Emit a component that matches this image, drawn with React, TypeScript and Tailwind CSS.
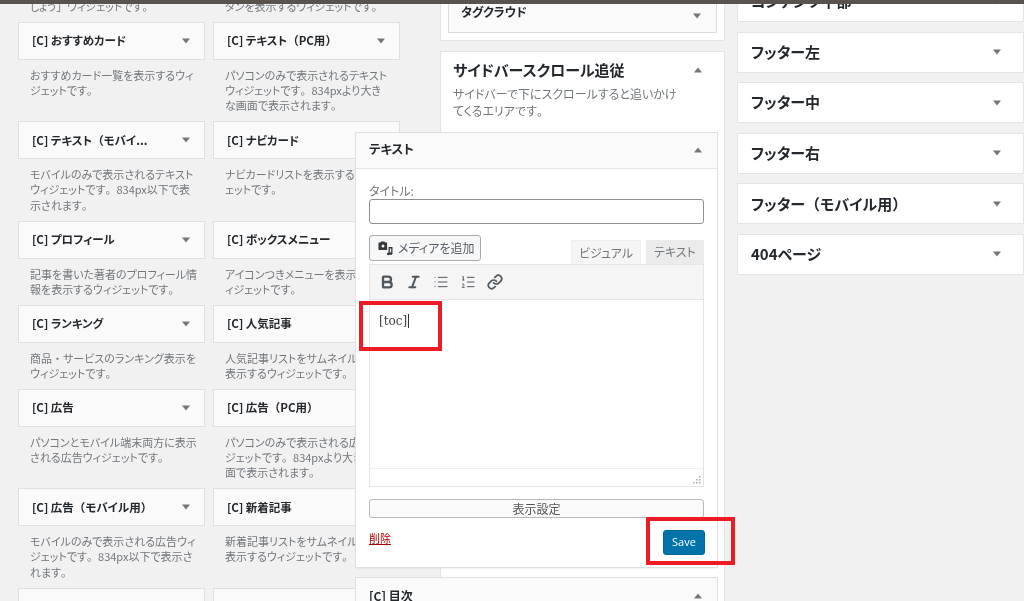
import { Bold, Italic, List, ListOrdered, Link } from "lucide-react";
import type { ReactNode } from "react";

const font = "[font-family:'Noto_Sans_CJK_JP','Liberation_Sans',sans-serif] [font-feature-settings:'palt']";

// Kana stay proportional; brackets and full stops keep their full width, as in the reference.
function J({ children }: { children: string }): ReactNode {
  return children.split(/([（）。・」])/).map((p, i) =>
    /^[（）。・」]$/.test(p) ? (
      <span key={i} className="[font-feature-settings:normal]">{p}</span>
    ) : (
      p
    )
  );
}

function Arrow({ up = false }: { up?: boolean }) {
  return (
    <svg width="10" height="6" viewBox="0 0 10 6" className="shrink-0 text-[#72777c]">
      <path d={up ? "M5 0.5 9 5.5H1Z" : "M1 0.5H9L5 5.5Z"} fill="currentColor" />
    </svg>
  );
}

type W = { t?: string; d: string[] };
const rows: W[][] = [
  [{ d: ["しょう」ウィジェットです。"] }, { d: ["タンを表示するウィジェットです。"] }],
  [
    { t: "[C] おすすめカード", d: ["おすすめカード一覧を表示するウィ", "ジェットです。"] },
    { t: "[C] テキスト（PC用）", d: ["パソコンのみで表示されるテキスト", "ウィジェットです。834pxより大き", "な画面で表示されます。"] },
  ],
  [
    { t: "[C] テキスト（モバイ...", d: ["モバイルのみで表示されるテキスト", "ウィジェットです。834px以下で表", "示されます。"] },
    { t: "[C] ナビカード", d: ["ナビカードリストを表示するウィジ", "ェットです。"] },
  ],
  [
    { t: "[C] プロフィール", d: ["記事を書いた著者のプロフィール情", "報を表示するウィジェットです。"] },
    { t: "[C] ボックスメニュー", d: ["アイコンつきメニューを表示するウ", "ィジェットです。"] },
  ],
  [
    { t: "[C] ランキング", d: ["商品・サービスのランキング表示を", "ウィジェットです。"] },
    { t: "[C] 人気記事", d: ["人気記事リストをサムネイルつきで", "表示するウィジェットです。"] },
  ],
  [
    { t: "[C] 広告", d: ["パソコンとモバイル端末両方に表示", "される広告ウィジェットです。"] },
    { t: "[C] 広告（PC用）", d: ["パソコンのみで表示される広告ウィ", "ジェットです。834pxより大きな画", "面で表示されます。"] },
  ],
  [
    { t: "[C] 広告（モバイル用）", d: ["モバイルのみで表示される広告ウィ", "ジェットです。834px以下で表示さ", "れます。"] },
    { t: "[C] 新着記事", d: ["新着記事リストをサムネイルつきで", "表示するウィジェットです。"] },
  ],
  [{ t: "", d: [] }, { t: "", d: [] }],
];

function Widget({ w }: { w: W }) {
  return (
    <div>
      {w.t !== undefined && (
        <div className="flex h-[38px] items-center justify-between border border-[#e0e0e0] bg-[#fafafa] pl-[13px] pr-[13px]">
          <span className="text-[11.5px] font-bold text-[#23282d] whitespace-nowrap"><J>{w.t}</J></span>
          <Arrow />
        </div>
      )}
      {w.d.length > 0 && (
        <div className="px-3 py-2 text-[11px] leading-[15.1px] text-[#72777c] whitespace-nowrap">
          {w.d.map((l) => (
            <div key={l}><J>{l}</J></div>
          ))}
        </div>
      )}
    </div>
  );
}

function Area({ t }: { t: string }) {
  return (
    <div className="flex h-[41px] shrink-0 items-center justify-between border border-[#e5e5e5] bg-white pl-[13px] pr-[21px]">
      <span className="text-[15px] font-bold text-[#23282d]"><J>{t}</J></span>
      <Arrow />
    </div>
  );
}

function MediaIcon() {
  return (
    <svg width="15" height="15" viewBox="0 0 15 15" className="text-[#32373c]">
      <path
        fill="currentColor"
        fillRule="evenodd"
        d="M0.5 1.5h2l.6-1h3.4l.6 1h2v7.5H0.5ZM5 3.6a1.5 1.5 0 1 0 0 3 1.5 1.5 0 0 0 0-3Z"
      />
      <path fill="currentColor" d="M10.5 6h4v6.6a1.5 1.3 0 1 1-1.3-1.3V7.6h-1.4v5.4a1.5 1.3 0 1 1-1.3-1.3Z" />
    </svg>
  );
}

export default function App() {
  return (
    <div className={`relative flex h-[601px] w-[1024px] flex-col overflow-hidden bg-[#f1f1f1] blur-[0.3px] ${font}`}>
      <div className="h-1 shrink-0 bg-[#5a534d]" />
      <div className="flex min-h-0 flex-1 overflow-hidden">
        {/* available widgets */}
        <div className="ml-[18px] mt-[-13px] w-[382px] shrink-0">
          {rows.map((r, i) => (
            <div key={i} className="grid grid-cols-[187px_187px] gap-x-2">
              <Widget w={r[0]} />
              <Widget w={r[1]} />
            </div>
          ))}
        </div>

        {/* sidebars */}
        <div className="ml-[40px] w-[285px] shrink-0">
          <div className="mt-[-30px] h-[67px] border border-[#e5e5e5] bg-white px-[7px]">
            <div className="flex h-[58px] items-end justify-between border border-[#dcdcdc] bg-[#fafafa] pb-[13px] pl-[12px] pr-[14px]">
              <span className="text-[12px] font-bold leading-[15px] text-[#23282d]">タグクラウド</span>
              <Arrow />
            </div>
          </div>
          <div className="mt-[10px] h-[700px] border border-[#e5e5e5] bg-white pt-2">
            <div className="flex items-center justify-between pl-[12px] pr-[21px]">
              <span className="text-[15px] font-bold leading-[20px] text-[#23282d]">サイドバースクロール追従</span>
              <Arrow up />
            </div>
            <div className="mt-[5px] pl-[12px] text-[12px] leading-[17px] text-[#72777c]">
              <div>サイドバーで下にスクロールすると追いかけ</div>
              <div><J>てくるエリアです。</J></div>
            </div>

            {/* opened widget */}
            <div className="relative z-10 ml-[-86px] mt-[13px] h-[436px] w-[363px] border border-[#e0e0e0] bg-white shadow-[0_1px_1px_rgba(0,0,0,0.04)]">
              <div className="flex h-[36px] items-center justify-between border-b border-[#e5e5e5] bg-[#fafafa] pb-[2px] pl-[13px] pr-[14px]">
                <span className="text-[12.5px] font-bold text-[#23282d]">テキスト</span>
                <Arrow up />
              </div>
              <div className="px-[13px]">
                <div className="mt-[14px] text-[12px] leading-[16px] text-[#72777c]">タイトル:</div>
                <div className="h-[25px] rounded-[3px] border border-[#8c8f94] bg-white" />
                <div className="mt-[11px] flex items-end justify-between">
                  <div className="mb-[3px] flex h-[26px] w-[112px] items-center gap-[5px] rounded-[3px] border border-[#a7aaad] bg-[#f7f7f7] pl-[8px] text-[12px] text-[#555d66]">
                    <MediaIcon />
                    <span>メディアを追加</span>
                  </div>
                  <div className="flex gap-[5px] text-[12px] text-[#72777c]">
                    <div className="flex h-[24px] w-[70px] items-center justify-center border border-b-0 border-[#eeeeee] bg-[#f5f5f5]">ビジュアル</div>
                    <div className="flex h-[24px] w-[58px] items-center justify-center bg-[#ebebeb]">テキスト</div>
                  </div>
                </div>
                <div className="border border-[#e5e5e5]">
                  <div className="flex h-[35px] items-center gap-[11px] border-b border-[#e5e5e5] bg-[#f5f5f5] pl-[9px] text-[#50575e]">
                    <Bold size={16} strokeWidth={3.5} />
                    <Italic size={16} strokeWidth={3} />
                    <List size={16} strokeWidth={1.5} />
                    <ListOrdered size={16} strokeWidth={1.5} />
                    <Link size={16} strokeWidth={2.6} />
                  </div>
                  <div className="h-[168px] pl-[9px] pt-[12px] [font-family:'DejaVu_Serif',serif] text-[12px] leading-[18px] text-[#444]">
                    <span className="border-r border-[#333] pr-px">[toc]</span>
                  </div>
                  <div className="flex h-[18px] items-end justify-end border-t border-[#eeeeee] p-[2px]">
                    <svg width="9" height="9" viewBox="0 0 9 9" className="text-[#a7aaad]">
                      <path fill="currentColor" d="M7 1h1.5v1.5H7ZM4 4h1.5v1.5H4Zm3 0h1.5v1.5H7ZM1 7h1.5v1.5H1Zm3 0h1.5v1.5H4Zm3 0h1.5v1.5H7Z" />
                    </svg>
                  </div>
                </div>
                <div className="mt-[12px] flex h-[19px] items-center justify-center rounded-[3px] border border-[#b4b9be] bg-[#fafafa] text-[12px] text-[#555]">表示設定</div>
                <div className="mt-[12px] flex items-start justify-between">
                  <a className="text-[11px] leading-[16px] text-[#a00] underline">削除</a>
                  <div className="mr-[-1px] flex h-[25px] w-[42px] items-center justify-center rounded-[3px] border border-[#006799] bg-[#0073aa] text-[11px] text-white [font-family:'Open_Sans',sans-serif]">Save</div>
                </div>
              </div>
            </div>

            <div className="relative z-10 ml-[-86px] mt-[9px] flex h-[38px] w-[363px] items-center justify-between border border-[#e0e0e0] bg-[#fafafa] pl-[13px] pr-[14px]">
              <span className="text-[12px] font-bold text-[#23282d]">[C] 目次</span>
              <Arrow up />
            </div>
          </div>
        </div>

        {/* right areas */}
        <div className="ml-[12px] mt-[-23px] flex flex-1 flex-col gap-[9.6px]">
          <Area t="コンテンツ下部" />
          <Area t="フッター左" />
          <Area t="フッター中" />
          <Area t="フッター右" />
          <Area t="フッター（モバイル用）" />
          <Area t="404ページ" />
        </div>
      </div>

      {/* annotations */}
      <div className="absolute left-[359px] top-[301px] z-20 h-[50px] w-[83px] border-[4px] border-[#ed1c24]" />
      <div className="absolute left-[646px] top-[517px] z-20 h-[48px] w-[89px] border-[4px] border-[#ed1c24]" />
    </div>
  );
}
